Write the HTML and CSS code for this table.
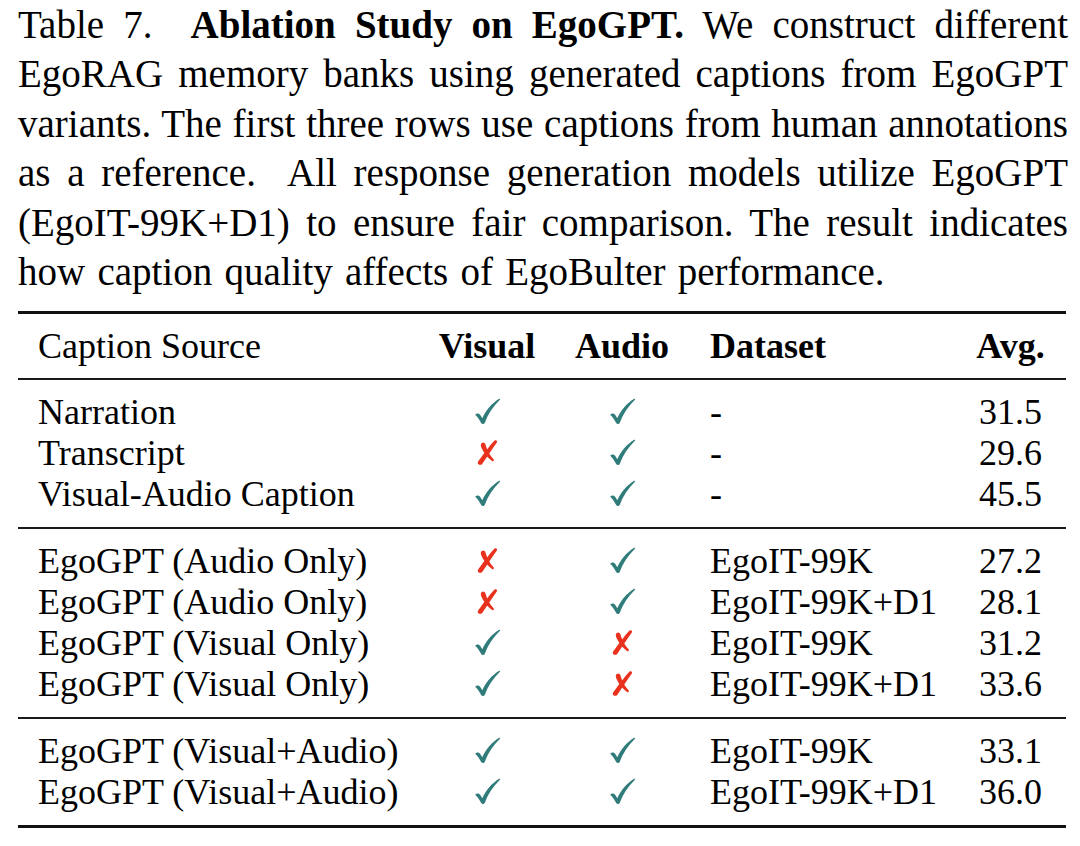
FILE: index.html
```html
<!DOCTYPE html>
<html lang="en">
<head>
<meta charset="utf-8">
<title>Table 7. Ablation Study on EgoGPT</title>
<link rel="stylesheet" href="styles.css">
</head>
<body>
<svg class="defs" width="0" height="0" aria-hidden="true">
  <defs>
    <symbol id="chk" viewBox="0 0 28 28">
      <path d="M1.2 17.4 C3 15.4 5.4 15.9 6.7 17.9 L8.6 21 C12.4 12.8 18.2 5.8 26.2 0.9 C27 0.6 27.4 1.2 26.9 1.8 C19.8 8.8 14.4 16.6 11.2 25.6 C10.6 27.2 8.6 27.6 7.6 26.2 C5.9 23 3.9 19.8 1.2 17.4 Z"/>
    </symbol>
    <symbol id="crs" viewBox="0 0 22 28">
      <path d="M18.8 1.6 C20.4 0.4 22.2 2 21.2 3.6 C16.8 9.6 11.6 17.6 6.2 25.6 C4.9 27.6 1.3 27 1.4 24.6 C1.6 23.2 2.8 21.8 3.9 20.4 C8.6 14.2 13.4 7.4 18.8 1.6 Z"/>
      <path d="M4.6 5.8 C5.4 2.8 8.6 3 9.4 5.6 C11 11.2 13.8 16.8 17.8 21 C18.8 22.2 17.6 23.6 16.2 22.8 C11.2 19.4 7.2 13.4 5 8.6 C4.7 7.6 4.5 6.6 4.6 5.8 Z"/>
    </symbol>
  </defs>
</svg>
<main class="page">
  <p class="caption">
    <span class="line">Table 7.&nbsp; <b>Ablation Study on EgoGPT.</b> We construct different</span>
    <span class="line">EgoRAG memory banks using generated captions from EgoGPT</span>
    <span class="line">variants. The first three rows use captions from human annotations</span>
    <span class="line">as a reference.&nbsp; All response generation models utilize EgoGPT</span>
    <span class="line">(EgoIT-99K+D1) to ensure fair comparison. The result indicates</span>
    <span class="line last">how caption quality affects of EgoBulter performance.</span>
  </p>
  <table class="tbl">
    <colgroup>
      <col class="c-src"><col class="c-vis"><col class="c-aud"><col class="c-ds"><col class="c-avg">
    </colgroup>
    <thead>
      <tr>
        <th class="src norm">Caption Source</th>
        <th class="mid">Visual</th>
        <th class="mid">Audio</th>
        <th class="ds">Dataset</th>
        <th class="mid">Avg.</th>
      </tr>
    </thead>
    <tbody>
      <tr class="first"><td class="src">Narration</td><td class="mid"><svg class="ok"><use href="#chk"/></svg></td><td class="mid"><svg class="ok"><use href="#chk"/></svg></td><td class="ds">-</td><td class="mid">31.5</td></tr>
      <tr><td class="src">Transcript</td><td class="mid"><svg class="no"><use href="#crs"/></svg></td><td class="mid"><svg class="ok"><use href="#chk"/></svg></td><td class="ds">-</td><td class="mid">29.6</td></tr>
      <tr class="last"><td class="src">Visual-Audio Caption</td><td class="mid"><svg class="ok"><use href="#chk"/></svg></td><td class="mid"><svg class="ok"><use href="#chk"/></svg></td><td class="ds">-</td><td class="mid">45.5</td></tr>
    </tbody>
    <tbody>
      <tr class="first"><td class="src">EgoGPT (Audio Only)</td><td class="mid"><svg class="no"><use href="#crs"/></svg></td><td class="mid"><svg class="ok"><use href="#chk"/></svg></td><td class="ds">EgoIT-99K</td><td class="mid">27.2</td></tr>
      <tr><td class="src">EgoGPT (Audio Only)</td><td class="mid"><svg class="no"><use href="#crs"/></svg></td><td class="mid"><svg class="ok"><use href="#chk"/></svg></td><td class="ds">EgoIT-99K+D1</td><td class="mid">28.1</td></tr>
      <tr><td class="src">EgoGPT (Visual Only)</td><td class="mid"><svg class="ok"><use href="#chk"/></svg></td><td class="mid"><svg class="no"><use href="#crs"/></svg></td><td class="ds">EgoIT-99K</td><td class="mid">31.2</td></tr>
      <tr class="last"><td class="src">EgoGPT (Visual Only)</td><td class="mid"><svg class="ok"><use href="#chk"/></svg></td><td class="mid"><svg class="no"><use href="#crs"/></svg></td><td class="ds">EgoIT-99K+D1</td><td class="mid">33.6</td></tr>
    </tbody>
    <tbody class="end">
      <tr class="first"><td class="src">EgoGPT (Visual+Audio)</td><td class="mid"><svg class="ok"><use href="#chk"/></svg></td><td class="mid"><svg class="ok"><use href="#chk"/></svg></td><td class="ds">EgoIT-99K</td><td class="mid">33.1</td></tr>
      <tr class="last"><td class="src">EgoGPT (Visual+Audio)</td><td class="mid"><svg class="ok"><use href="#chk"/></svg></td><td class="mid"><svg class="ok"><use href="#chk"/></svg></td><td class="ds">EgoIT-99K+D1</td><td class="mid">36.0</td></tr>
    </tbody>
  </table>
</main>
</body>
</html>
```

FILE: styles.css
```css
html, body {
  margin: 0;
  padding: 0;
  background: #ffffff;
}

body {
  font-family: "Liberation Serif", "Times New Roman", serif;
  color: #000000;
}

.defs {
  position: absolute;
  width: 0;
  height: 0;
  overflow: hidden;
}

.page {
  width: 1050px;
  margin-left: 18px;
}

.caption {
  margin: 0;
  font-size: 39px;
  line-height: 49.4px;
}

.caption .line {
  display: block;
  text-align: justify;
  text-align-last: justify;
  white-space: nowrap;
}

.caption .line.last {
  text-align-last: left;
  word-spacing: 2.5px;
}

.caption b {
  font-weight: bold;
}

.tbl {
  margin-top: 15px;
  width: 1048px;
  border-collapse: collapse;
  table-layout: fixed;
  font-size: 36px;
  border-top: 3px solid #111;
}

.c-src { width: 410px; }
.c-vis { width: 118px; }
.c-aud { width: 152px; }
.c-ds { width: 257px; }
.c-avg { width: 111px; }

.tbl th,
.tbl td {
  padding: 0;
  height: 41px;
  line-height: 41px;
  vertical-align: middle;
  white-space: nowrap;
}

.tbl thead th {
  height: 64px;
  font-weight: bold;
  border-bottom: 2px solid #1a1a1a;
}

.tbl thead th.norm {
  font-weight: normal;
}

.tbl tbody {
  border-bottom: 2px solid #1a1a1a;
}

.tbl tbody.end {
  border-bottom: 3px solid #111;
}

.tbl tr.first td {
  padding-top: 12px;
}

.tbl tr.last td {
  padding-bottom: 12px;
}

.src {
  text-align: left;
  padding-left: 20px !important;
}

.mid {
  text-align: center;
}

.ds {
  text-align: left;
  padding-left: 12px !important;
}

.ok,
.no {
  display: inline-block;
  vertical-align: -1px;
}

.ok {
  width: 27px;
  height: 27px;
  fill: #2f7c7a;
}

.no {
  width: 22px;
  height: 27px;
  fill: #e8321e;
}
```
